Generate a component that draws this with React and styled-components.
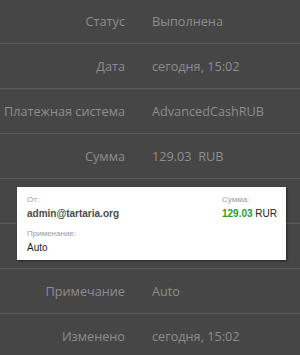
import React from "react";
import styled, { createGlobalStyle } from "styled-components";

const Global = createGlobalStyle`
  html, body { margin: 0; padding: 0; background: #464646; }
  body { font-family: "Open Sans", "Liberation Sans", sans-serif; }
`;

const Page = styled.div`
  position: relative;
  width: 300px;
  height: 355px;
  overflow: hidden;
  background: #464646;
`;

const List = styled.div`
  margin-top: -1px;
  display: flex;
  flex-direction: column;
`;

const Row = styled.div`
  display: grid;
  grid-template-columns: 125px 1fr;
  column-gap: 27px;
  align-items: center;
  height: 45px;
  box-sizing: border-box;
  border-bottom: 1px solid #5b5b5b;
  font-size: 12.7px;
  color: #8d8d8d;
`;

const Label = styled.div`
  text-align: right;
  white-space: nowrap;
`;

const Value = styled.div`
  white-space: pre;
`;

const Card = styled.div`
  position: absolute;
  left: 17px;
  top: 187px;
  width: 269px;
  height: 73px;
  box-sizing: border-box;
  padding: 8px 9px 5px 10px;
  background: #ffffff;
  box-shadow: 1px 1px 2px rgba(0, 0, 0, 0.45);
  display: flex;
  justify-content: space-between;
  font-family: "Liberation Sans", Arial, sans-serif;
`;

const Col = styled.div`
  display: flex;
  flex-direction: column;
`;

const Small = styled.div`
  font-size: 8px;
  line-height: 10px;
  color: #9a9a9a;
  margin-top: ${(p) => (p.$spaced ? "8px" : "0")};
`;

const Main = styled.div`
  font-size: 10px;
  line-height: 14px;
  margin-top: 2px;
  color: ${(p) => (p.$strong ? "#4a4a4a" : "#1e1e1e")};
  font-weight: ${(p) => (p.$strong ? 600 : 400)};
`;

const Amount = styled.span`
  color: #2f9a2f;
  font-weight: bold;
`;

const Currency = styled.span`
  color: #222;
`;

const rows = [
  ["Статус", "Выполнена"],
  ["Дата", "сегодня, 15:02"],
  ["Платежная система", "AdvancedCashRUB"],
  ["Сумма", "129.03  RUB"],
  ["", ""],
  ["", ""],
  ["Примечание", "Auto"],
  ["Изменено", "сегодня, 15:02"],
];

export default function App() {
  return (
    <Page>
      <Global />
      <List>
        {rows.map(([l, v], i) => (
          <Row key={i}>
            <Label>{l}</Label>
            <Value>{v}</Value>
          </Row>
        ))}
      </List>
      <Card>
        <Col>
          <Small>От:</Small>
          <Main $strong>admin@tartaria.org</Main>
          <Small $spaced>Применание:</Small>
          <Main>Auto</Main>
        </Col>
        <Col>
          <Small>Сумма:</Small>
          <Main>
            <Amount>129.03</Amount> <Currency>RUR</Currency>
          </Main>
        </Col>
      </Card>
    </Page>
  );
}
